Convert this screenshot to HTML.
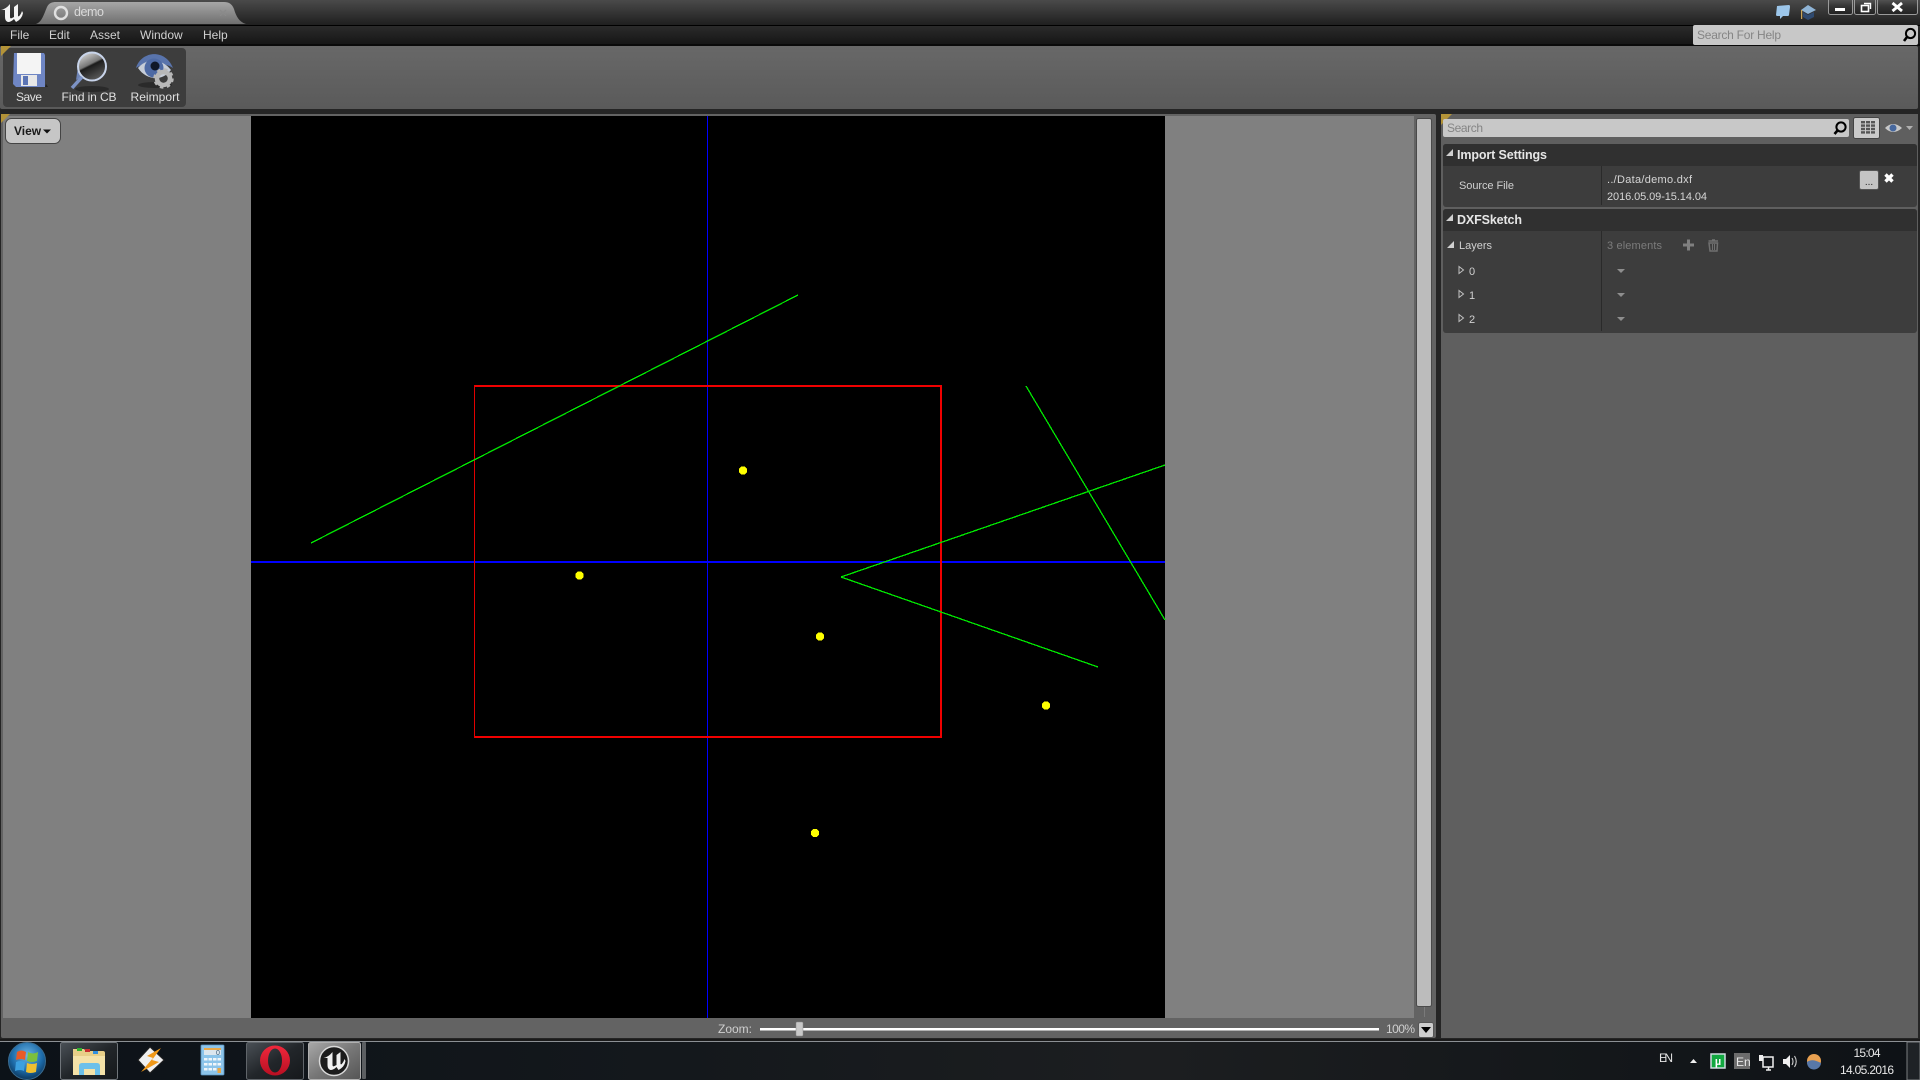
<!DOCTYPE html>
<html><head><meta charset="utf-8"><title>demo</title>
<style>
html,body{margin:0;padding:0;background:#000;width:1920px;height:1080px;overflow:hidden}
svg{display:block;position:absolute;left:0;top:0}
text{font-family:"Liberation Sans",sans-serif}
</style></head><body>
<svg width="1920" height="1080" viewBox="0 0 1920 1080" xmlns="http://www.w3.org/2000/svg">
<defs>
<linearGradient id="tb" x1="0" y1="0" x2="0" y2="1"><stop offset="0" stop-color="#4a4a4a"/><stop offset="1" stop-color="#1f1f1f"/></linearGradient>
<linearGradient id="tab" x1="0" y1="0" x2="0" y2="1"><stop offset="0" stop-color="#a6a6a6"/><stop offset="1" stop-color="#6f6f6f"/></linearGradient>
<linearGradient id="menu" x1="0" y1="0" x2="0" y2="1"><stop offset="0" stop-color="#2c2c2c"/><stop offset="1" stop-color="#151515"/></linearGradient>
<linearGradient id="tool" x1="0" y1="0" x2="0" y2="1"><stop offset="0" stop-color="#686868"/><stop offset="1" stop-color="#5a5a5a"/></linearGradient>
<linearGradient id="task" x1="0" y1="0" x2="1" y2="0"><stop offset="0" stop-color="#0c1218"/><stop offset=".35" stop-color="#14181c"/><stop offset=".6" stop-color="#1c1e20"/><stop offset="1" stop-color="#0e1216"/></linearGradient>
<linearGradient id="btn" x1="0" y1="0" x2="0" y2="1"><stop offset="0" stop-color="#5b5b5b"/><stop offset=".5" stop-color="#343434"/><stop offset="1" stop-color="#222"/></linearGradient>
<linearGradient id="tbtn" x1="0" y1="0" x2="1" y2="1"><stop offset="0" stop-color="#4a5056"/><stop offset=".5" stop-color="#22262a"/><stop offset="1" stop-color="#15181b"/></linearGradient>
<linearGradient id="ubtn" x1="0" y1="0" x2="1" y2="1"><stop offset="0" stop-color="#a8a8a8"/><stop offset=".5" stop-color="#777"/><stop offset="1" stop-color="#555"/></linearGradient>
<radialGradient id="orb" cx=".5" cy=".35" r=".7"><stop offset="0" stop-color="#6cb6e6"/><stop offset=".6" stop-color="#1c6aa8"/><stop offset="1" stop-color="#0a2c4c"/></radialGradient>
<linearGradient id="lens" x1="0" y1="0" x2="0.5" y2="1"><stop offset="0" stop-color="#ececec"/><stop offset=".5" stop-color="#777"/><stop offset=".56" stop-color="#1c1c1c"/><stop offset="1" stop-color="#555"/></linearGradient>
<linearGradient id="opera" x1="0" y1="0" x2="0" y2="1"><stop offset="0" stop-color="#f0283c"/><stop offset="1" stop-color="#b80f22"/></linearGradient>
</defs>

<!-- base -->
<rect width="1920" height="1080" fill="#252525"/>
<!-- title bar -->
<rect x="0" y="0" width="1920" height="25" fill="url(#tb)"/>
<path d="M36 24 C42 22 44 14 47 7 C49 3 52 2 56 2 L224 2 C229 2 232 4 234 9 C236 16 239 22 246 24 Z" fill="url(#tab)"/>
<!-- UE logo -->
<path d="M1 10 Q6 9 10 4 L10 17 Q10 19 12 18 L14 17 L14 7 L18 4 L18 16 Q19 17 20 15 Q21 14 22 11 L23 13 Q22 19 16 22 L14 19 Q11 22 8 22 Q5 21 5 17 L5 10 Q3 10 1 10 Z" fill="#f4f4f4"/>
<circle cx="61" cy="13" r="6" fill="none" stroke="#e0e0e0" stroke-width="2.4"/>
<text x="74" y="16" font-size="12.5" fill="#dadada" textLength="30">demo</text>
<path d="M220 10 L226 16 M226 10 L220 16" stroke="#8a8a8a" stroke-width="1.2"/>

<!-- chat / cap icons -->
<path d="M1777 6 L1789 5 Q1790 5 1790 7 L1789 15 Q1789 16 1787 16 L1783 16 L1780 19 L1780 16 L1778 16 Q1776 16 1776 15 Z" fill="#9cc6ea"/>
<path d="M1801 10 L1808 5 L1816 10 L1808 14 Z" fill="#8fb4d6"/>
<path d="M1803 12 L1803 17 L1808 20 L1814 17 L1814 12 L1808 15 Z" fill="#2f4a70"/>
<rect x="1801" y="10" width="1.2" height="9" fill="#c8a45a"/>

<!-- window buttons -->
<rect x="1828.5" y="-2" width="24" height="16.5" rx="2" fill="url(#btn)" stroke="#9a9a9a"/>
<rect x="1854.5" y="-2" width="21" height="16.5" rx="2" fill="url(#btn)" stroke="#9a9a9a"/>
<rect x="1877.5" y="-2" width="40" height="16.5" rx="2" fill="url(#btn)" stroke="#9a9a9a"/>
<rect x="1835" y="8" width="10" height="3" fill="#fff"/>
<rect x="1861.5" y="5.5" width="7" height="6" fill="none" stroke="#fff" stroke-width="1.6"/>
<path d="M1864 3.5 H1870.5 V9" fill="none" stroke="#fff" stroke-width="1.4"/>
<path d="M1892.5 3 L1902 11 M1902 3 L1892.5 11" stroke="#fff" stroke-width="2.8"/>

<!-- menu bar -->
<rect x="0" y="25" width="1920" height="20" fill="url(#menu)"/>
<rect x="0" y="25" width="1920" height="1" fill="#000"/>
<rect x="0" y="44" width="1920" height="2" fill="#0a0a0a"/>
<g font-size="12" fill="#d0d0d0">
<text x="10" y="39">File</text><text x="49" y="39">Edit</text><text x="90" y="39">Asset</text><text x="140" y="39">Window</text><text x="203" y="39">Help</text>
</g>
<rect x="1693" y="25" width="225" height="20" rx="2" fill="#c8c8c8"/>
<text x="1697" y="39" font-size="12" fill="#858585" textLength="84">Search For Help</text>
<circle cx="1910.5" cy="33.5" r="4.6" fill="none" stroke="#000" stroke-width="2"/>
<path d="M1907 37 L1904 41" stroke="#000" stroke-width="2.6"/>

<!-- toolbar -->
<rect x="0" y="46" width="1918" height="63" rx="2" fill="url(#tool)"/>
<rect x="3" y="48" width="183" height="59" rx="4" fill="#3d3d3d"/>
<path d="M1 46 H11 L1 56 Z" fill="#b39338"/>
<!-- save -->
<path d="M14 53 H44 L45 55 V87 H16 L13 84 Z" fill="#6f86c4"/>
<rect x="17" y="53" width="24" height="21" fill="#f4f4f4"/>
<rect x="21" y="75" width="16" height="11" fill="#e8e8e8"/>
<rect x="23" y="76" width="5" height="9" fill="#5b74b4"/>
<path d="M45 87 L48 87 L46 84 Z" fill="#222"/>
<!-- find -->
<ellipse cx="92" cy="89" rx="17" ry="3" fill="#2a2a2a"/>
<path d="M79 60 L84 58 L84 76 L76 80 Z" fill="#6e84b6"/>
<circle cx="92" cy="66.5" r="14" fill="url(#lens)" stroke="#c8d4ea" stroke-width="2"/>
<path d="M82 77 L72 88" stroke="#7c92c4" stroke-width="3.5"/>
<!-- reimport -->
<ellipse cx="155" cy="85" rx="17" ry="3" fill="#2a2a2a"/>
<path d="M136 68 C141 51 165 48 173 68 C165 62 144 62 136 68 Z" fill="#5974ac"/>
<path d="M138 68 C146 58 162 58 171 70 C162 82 146 80 138 68 Z" fill="#c6cdd8"/>
<circle cx="154" cy="68" r="9.5" fill="#4e6aa4"/>
<circle cx="155" cy="66" r="4.5" fill="#101828"/>
<circle cx="163.5" cy="78.5" r="6.5" fill="none" stroke="#b8b8b8" stroke-width="4.5"/>
<circle cx="163.5" cy="78.5" r="9" fill="none" stroke="#b8b8b8" stroke-width="2.5" stroke-dasharray="3.5 3.6"/>
<g font-size="12" fill="#e0e0e0" text-anchor="middle">
<text x="29" y="101" textLength="26">Save</text><text x="89" y="101" textLength="55">Find in CB</text><text x="155" y="101" textLength="49">Reimport</text>
</g>

<!-- viewport panel -->
<rect x="1" y="114" width="1435" height="924" rx="2" fill="#636363"/>
<rect x="3" y="116" width="1411" height="902" fill="#808080"/>
<path d="M1 114 H10 L1 123 Z" fill="#b39338"/>
<rect x="5.5" y="118.5" width="55" height="25" rx="6" fill="#c6c6c6" stroke="#444"/>
<text x="14" y="135" font-size="12" font-weight="bold" fill="#1a1a1a">View</text>
<path d="M43 129.5 H51 L47 133.5 Z" fill="#111"/>

<rect x="251" y="116" width="914" height="902" fill="#000"/>
<g shape-rendering="crispEdges">
<rect x="251" y="561" width="914" height="2" fill="#0000ff"/>
<rect x="707" y="116" width="1" height="902" fill="#0000ff"/>
<rect x="474" y="385" width="468" height="2" fill="#f00000"/>
<rect x="474" y="736" width="468" height="2" fill="#f00000"/>
<rect x="474" y="385" width="1" height="353" fill="#e00000"/>
<rect x="940" y="385" width="2" height="353" fill="#f00000"/>
</g>
<g stroke="#00e800" stroke-width="1.3" fill="none" shape-rendering="crispEdges">
<path d="M311 543 L798 295"/>
<path d="M841 577 L1165 465"/>
<path d="M841 577 L1098 667"/>
<path d="M1026 386 L1165 620"/>
</g>
<g fill="#ffff00" shape-rendering="crispEdges">
<circle cx="743" cy="470.5" r="4.2"/><circle cx="579.5" cy="575.5" r="4.2"/><circle cx="820" cy="636.5" r="4.2"/><circle cx="1046" cy="705.5" r="4.2"/><circle cx="815" cy="833" r="4.2"/>
</g>

<!-- scrollbar -->
<rect x="1416.5" y="118.5" width="15" height="888" rx="2" fill="#bcbcbc" stroke="#4a4a4a"/>
<rect x="1424" y="1007" width="1" height="10" fill="#7a7a7a"/>

<!-- zoom bar -->
<text x="718" y="1033" font-size="12" fill="#cfcfcf" textLength="34">Zoom:</text>
<rect x="760" y="1028" width="619" height="2.5" fill="#fff"/>
<rect x="796" y="1022" width="7" height="14" rx="1" fill="#c8c8c8" stroke="#8a8a8a" stroke-width=".5"/>
<text x="1386" y="1033" font-size="12" fill="#cfcfcf" textLength="29">100%</text>
<rect x="1418.5" y="1022.5" width="15" height="15" rx="2" fill="#cdcdcd" stroke="#555"/>
<path d="M1421 1027 H1431 L1426 1033 Z" fill="#000"/>

<!-- right panel -->
<rect x="1441" y="114" width="477" height="924" fill="#5f5f5f"/>
<path d="M1441 114 H1452 L1441 125 Z" fill="#b39338"/>
<rect x="1443" y="119" width="406" height="18" rx="2" fill="#c8c8c8"/>
<text x="1447" y="132" font-size="12" fill="#858585" textLength="36">Search</text>
<circle cx="1841" cy="127" r="4.6" fill="none" stroke="#000" stroke-width="2"/>
<path d="M1837.5 130.5 L1834.5 134" stroke="#000" stroke-width="2.6"/>
<rect x="1853.5" y="117.5" width="26" height="21" rx="2" fill="#cacaca" stroke="#444"/>
<g fill="#555"><rect x="1861" y="121" width="14" height="2.4"/><rect x="1861" y="124.4" width="14" height="2.4"/><rect x="1861" y="127.8" width="14" height="2.4"/><rect x="1861" y="131.2" width="14" height="2.4"/></g>
<g fill="#cacaca"><rect x="1865" y="121" width="1" height="13"/><rect x="1870" y="121" width="1" height="13"/></g>
<path d="M1885 128 Q1893 120 1902 128 Q1893 136 1885 128 Z" fill="#c8c8c8"/>
<circle cx="1893" cy="128" r="3.5" fill="#47689e"/>
<path d="M1906 126 H1913 L1909.5 130 Z" fill="#b0b0b0"/>

<!-- Import settings -->
<rect x="1443" y="144" width="474" height="63" rx="3" fill="#3d3d3d"/>
<path d="M1443 166 V147 Q1443 144 1446 144 H1914 Q1917 144 1917 147 V166 Z" fill="#303030"/>
<rect x="1601" y="166" width="1" height="39" fill="#2a2a2a"/>
<path d="M1446 156 L1453 149 V156 Z" fill="#d0d0d0"/>
<text x="1457" y="159" font-size="12.5" font-weight="bold" fill="#e6e6e6" textLength="90">Import Settings</text>
<text x="1459" y="189" font-size="11" fill="#d0d0d0" textLength="55">Source File</text>
<text x="1607" y="183" font-size="11" fill="#d6d6d6" textLength="85">../Data/demo.dxf</text>
<text x="1607" y="200" font-size="11" fill="#d6d6d6" textLength="100">2016.05.09-15.14.04</text>
<rect x="1859.5" y="170.5" width="19" height="19" rx="2" fill="#c4c4c4" stroke="#555"/>
<text x="1869" y="185" font-size="10" fill="#222" text-anchor="middle">...</text>
<path d="M1885.5 174.5 L1892.5 181.5 M1892.5 174.5 L1885.5 181.5" stroke="#fff" stroke-width="3.4"/>

<!-- DXFSketch -->
<rect x="1443" y="209" width="474" height="124" rx="3" fill="#3d3d3d"/>
<path d="M1443 231 V212 Q1443 209 1446 209 H1914 Q1917 209 1917 212 V231 Z" fill="#303030"/>
<rect x="1601" y="231" width="1" height="100" fill="#2a2a2a"/>
<path d="M1446 221 L1453 214 V221 Z" fill="#d0d0d0"/>
<text x="1457" y="224" font-size="12.5" font-weight="bold" fill="#e6e6e6" textLength="65">DXFSketch</text>
<path d="M1447 248 L1454 241 V248 Z" fill="#d0d0d0"/>
<text x="1459" y="249" font-size="11" fill="#d0d0d0" textLength="33">Layers</text>
<text x="1607" y="249" font-size="11" fill="#7c7c7c" textLength="55">3 elements</text>
<path d="M1683 245 H1694 M1688.5 239.5 V250.5" stroke="#808080" stroke-width="3"/>
<path d="M1708.5 241 H1718 M1712 240 H1715" stroke="#707070" stroke-width="1.5"/>
<path d="M1709 243 H1717.5 L1717 251 H1710 Z" fill="none" stroke="#707070" stroke-width="1.5"/>
<path d="M1712.5 244 V250 M1714.5 244 V250" stroke="#707070"/>
<g fill="none" stroke="#c0c0c0" stroke-width="1">
<path d="M1459 266.5 L1463.5 270 L1459 273.5 Z"/><path d="M1459 290.5 L1463.5 294 L1459 297.5 Z"/><path d="M1459 314.5 L1463.5 318 L1459 321.5 Z"/>
</g>
<g font-size="11" fill="#d0d0d0"><text x="1469" y="275">0</text><text x="1469" y="299">1</text><text x="1469" y="323">2</text></g>
<g fill="#8e8e8e"><path d="M1617 269 H1625 L1621 273 Z"/><path d="M1617 293 H1625 L1621 297 Z"/><path d="M1617 317 H1625 L1621 321 Z"/></g>

<!-- taskbar -->
<rect x="0" y="1039" width="1920" height="2" fill="#1a1a1a"/>
<rect x="0" y="1041" width="1920" height="1" fill="#8c9094"/>
<rect x="0" y="1042" width="1920" height="38" fill="url(#task)"/>
<!-- start orb -->
<circle cx="27" cy="1061" r="18.5" fill="url(#orb)" stroke="#3a6c90" stroke-width="1"/>
<path d="M17 1052 Q21 1049 26 1052 L25 1060 Q21 1058 16 1060 Z" fill="#e85a28"/>
<path d="M28 1052 Q33 1055 38 1052 L37 1061 Q32 1063 27 1061 Z" fill="#7cc03c"/>
<path d="M16 1062 Q20 1060 25 1062 L24 1071 Q20 1069 15 1071 Z" fill="#3ca0e0"/>
<path d="M27 1063 Q32 1065 37 1063 L36 1072 Q30 1074 26 1072 Z" fill="#f0c030"/>
<!-- folder button -->
<rect x="60.5" y="1042.5" width="57" height="37" rx="2" fill="url(#tbtn)" stroke="#70757a"/>
<path d="M73 1049 H84 L86 1051 H103 Q105 1051 105 1053 V1075 H73 Z" fill="#e8cf88"/>
<rect x="77" y="1048" width="5" height="3" fill="#30b030"/>
<rect x="85" y="1049" width="5" height="3" fill="#c83030"/>
<rect x="93" y="1051" width="5" height="3" fill="#3090e0"/>
<path d="M73 1056 H105 V1075 H73 Z" fill="#f4e2a8"/>
<path d="M79 1075 V1066 Q79 1063 82 1063 H97 Q100 1063 100 1066 V1075 H95 V1069 H84 V1075 Z" fill="#6cc0ea"/>
<!-- winamp -->
<path d="M138 1060 L150 1047 L164 1060 L150 1073 Z" fill="#f0f0f0" stroke="#222"/>
<path d="M161 1048 L147 1056 L153 1058 L141 1072 L159 1062 L152 1060 Z" fill="#f09818"/>
<!-- calc -->
<rect x="201" y="1045" width="23" height="30" rx="1" fill="#8cc4ea" stroke="#5a94c0" stroke-width=".8"/>
<rect x="204" y="1048" width="17" height="7" fill="#dce6ee"/>
<text x="216" y="1055" font-size="7" fill="#3c5c78">0</text>
<rect x="204" y="1048" width="17" height="2" fill="#e8a848"/>
<g fill="#f0f6fa"><rect x="204" y="1058" width="3.5" height="2.5"/><rect x="208.5" y="1058" width="3.5" height="2.5"/><rect x="213" y="1058" width="3.5" height="2.5"/><rect x="217.5" y="1058" width="3.5" height="2.5"/><rect x="204" y="1063" width="3.5" height="2.5"/><rect x="208.5" y="1063" width="3.5" height="2.5"/><rect x="213" y="1063" width="3.5" height="2.5"/><rect x="217.5" y="1063" width="3.5" height="2.5"/><rect x="204" y="1068" width="3.5" height="2.5"/><rect x="208.5" y="1068" width="3.5" height="2.5"/><rect x="213" y="1068" width="3.5" height="2.5"/><rect x="217.5" y="1068" width="3.5" height="5" fill="#e8a848"/></g>
<!-- opera button -->
<rect x="246.5" y="1042.5" width="57" height="37" rx="2" fill="url(#tbtn)" stroke="#60656a"/>
<path fill-rule="evenodd" fill="url(#opera)" d="M260 1060.5 A15 15 0 1 1 290 1060.5 A15 15 0 1 1 260 1060.5 Z M268 1060.5 A7 12 0 1 0 282 1060.5 A7 12 0 1 0 268 1060.5 Z"/>
<!-- UE button -->
<rect x="308.5" y="1042.5" width="52" height="37" rx="2" fill="url(#ubtn)" stroke="#b0b0b0"/>
<rect x="362" y="1042" width="4" height="37" rx="1" fill="#5c5f62"/>
<circle cx="334" cy="1061" r="14.5" fill="#1c1c1c" stroke="#d8d8d8" stroke-width="1.5"/>
<path transform="translate(322.5 1048)" d="M1 10 Q6 9 10 4 L10 17 Q10 19 12 18 L14 17 L14 7 L18 4 L18 16 Q19 17 20 15 Q21 14 22 11 L23 13 Q22 19 16 22 L14 19 Q11 22 8 22 Q5 21 5 17 L5 10 Q3 10 1 10 Z" fill="#f0f0f0"/>
<!-- tray -->
<text x="1659" y="1062" font-size="12" fill="#e4e4e4" textLength="14">EN</text>
<path d="M1690 1063 L1693.5 1059 L1697 1063 Z" fill="#f0f0f0"/>
<rect x="1711" y="1054" width="14" height="14" fill="#12a840" stroke="#d0dce0" stroke-width="1.5"/>
<text x="1718" y="1065" font-size="11" font-weight="bold" fill="#fff" text-anchor="middle">µ</text>
<rect x="1734" y="1053" width="16" height="16" fill="#6c6c6c"/>
<text x="1736" y="1066" font-size="12" fill="#e8e8e8">En</text>
<path d="M1763 1057 H1773 V1067 H1763 Z M1766 1070 H1771 M1768.5 1067 V1070" fill="none" stroke="#f0f0f0" stroke-width="1.5"/>
<rect x="1759" y="1055" width="4" height="6" fill="#f0f0f0"/>
<path d="M1783 1059 H1786 L1790 1055 V1068 L1786 1064 H1783 Z" fill="#f0f0f0"/>
<path d="M1792 1058 Q1794 1061.5 1792 1065 M1794.5 1056 Q1798 1061.5 1794.5 1067" fill="none" stroke="#d0d0d0" stroke-width="1.1"/>
<circle cx="1814" cy="1061" r="7" fill="#e8a050"/>
<path d="M1807 1062 Q1812 1058 1821 1063 A7 7 0 0 1 1807 1062 Z" fill="#5878a8"/>
<text x="1867" y="1057" font-size="12" fill="#e8e8e8" text-anchor="middle" textLength="27">15:04</text>
<text x="1867" y="1074" font-size="12" fill="#e8e8e8" text-anchor="middle" textLength="54">14.05.2016</text>
<rect x="1907" y="1042" width="13" height="38" fill="#1e2226" stroke="#7a7d80" stroke-width="1"/>
</svg>
</body></html>
